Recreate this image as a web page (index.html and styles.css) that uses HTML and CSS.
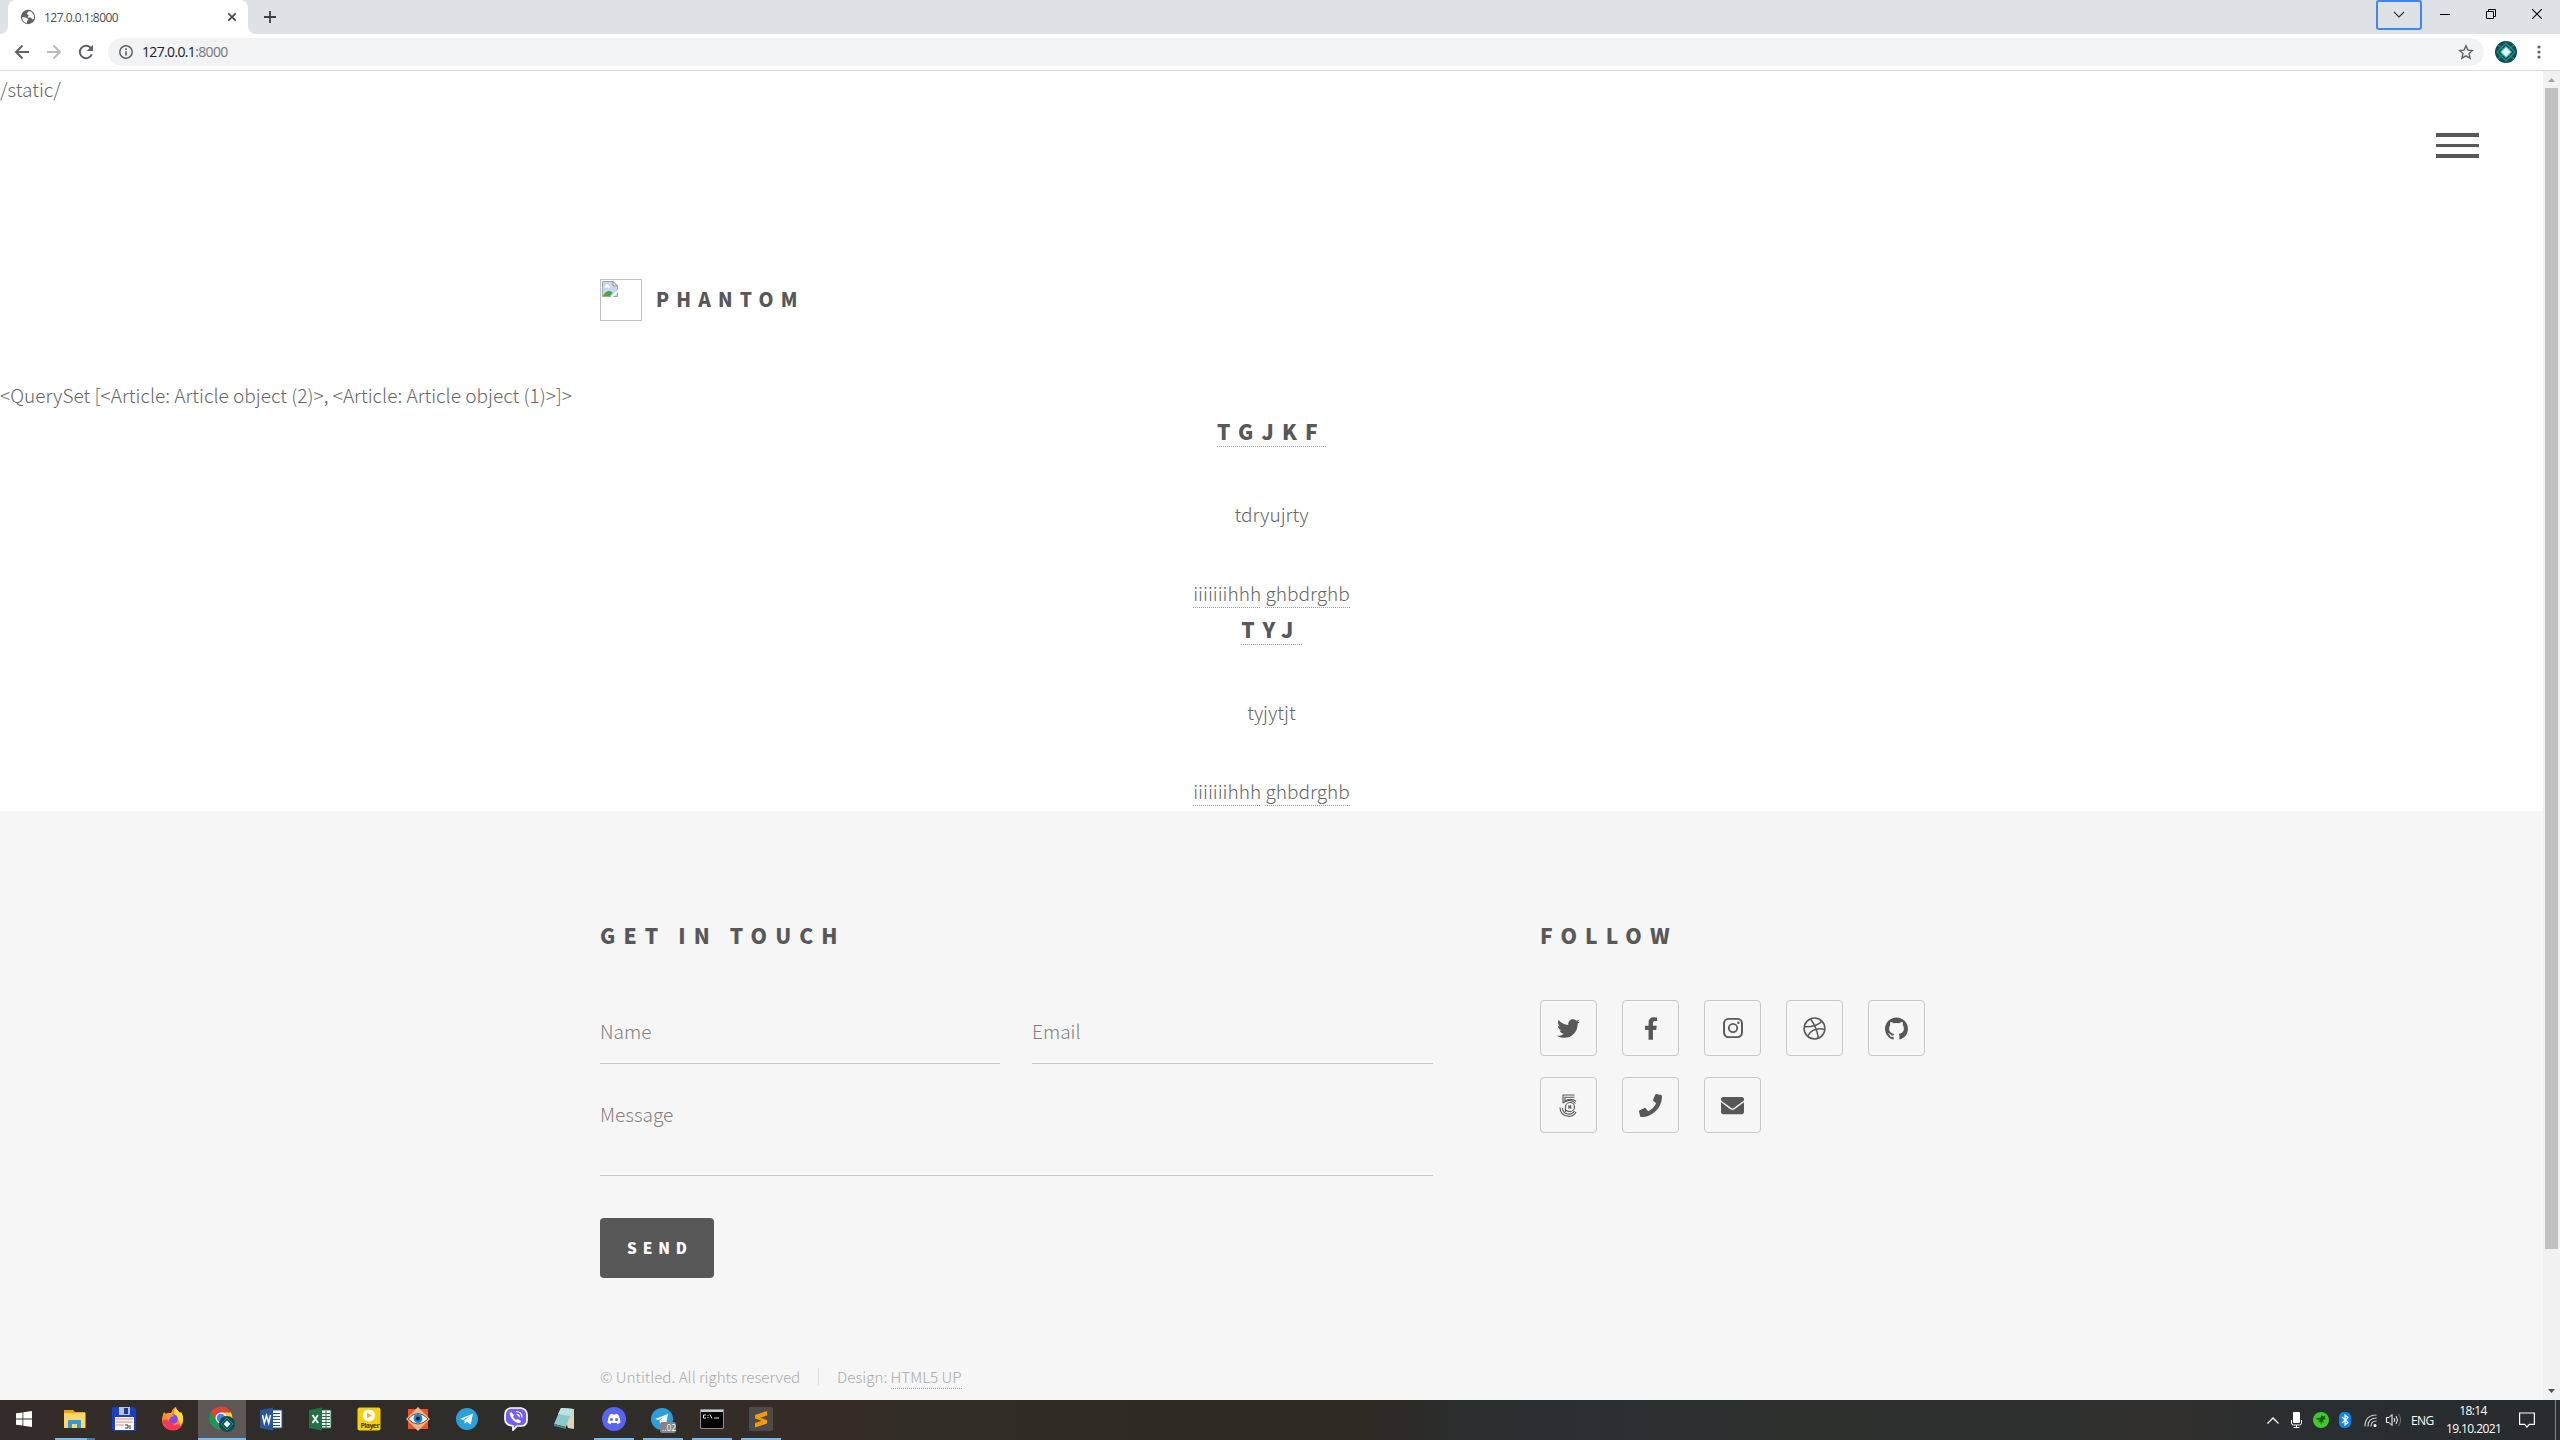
FILE: index.html
```html
<!DOCTYPE html>
<html lang="en">
<head>
<meta charset="utf-8">
<title>127.0.0.1:8000</title>
<link rel="stylesheet" href="styles.css">
</head>
<body>
<header class="tabs">
  <div class="tab-edge"></div>
  <div class="tab">
    <svg class="globe" width="16" height="16" viewBox="0 0 16 16"><circle cx="8" cy="8" r="7.2" fill="#5f6368"/><path d="M2 8.500c2-.6 3.500-.3 4.500.5 1 .7 2 .3 1.800 1.500-.2 1-1.300.8-1.300 2v1.400A6 6 0 0 1 2 8.500zM8.500 2c.3 1.200-1.700 1.500-1.700 2.700 0 1 1.800.6 1.800 1.700S7 7.700 8 8.400c1 .5 2-.4 3 .3s.5 1.600 1.500 1.600l1.200-.3A6 6 0 0 0 8.500 2z" fill="#fff"/></svg>
    <span class="tab-title">127.0.0.1:8000</span>
    <svg class="tab-close" width="10" height="10" viewBox="0 0 10 10"><path d="M1.300 1.300l7.400 7.400M8.700 1.300l-7.400 7.400" stroke="#45494d" stroke-width="1.700"/></svg>
  </div>
  <div class="tab-rest">
    <svg width="12" height="12" viewBox="0 0 12 12"><path d="M6 0v12M0 6h12" stroke="#3c4043" stroke-width="1.800"/></svg>
  </div>
  <div class="win-search"><svg width="12" height="8" viewBox="0 0 12 8"><path d="M1 1l5 5 5-5" fill="none" stroke="#333" stroke-width="1.100"/></svg></div>
  <div class="win-btn"><svg width="10" height="10" viewBox="0 0 10 10"><path d="M0 5.500h10" stroke="#000"/></svg></div>
  <div class="win-btn"><svg width="10" height="10" viewBox="0 0 10 10" fill="none" stroke="#000"><path d="M.5 2.500h7v7h-7zM2.500 2.500v-2h7v7h-2"/></svg></div>
  <div class="win-btn"><svg width="10" height="10" viewBox="0 0 10 10"><path d="M0 0l10 10M10 0L0 10" stroke="#000" stroke-width="1.100"/></svg></div>
</header>
<nav class="toolbar">
  <svg class="nav-icon" width="16" height="16" viewBox="0 0 16 16" fill="none" stroke="#5f6368" stroke-width="2"><path d="M15 8H2.500M8.500 1.500L2 8l6.500 6.500"/></svg>
  <svg class="nav-icon" width="16" height="16" viewBox="0 0 16 16" fill="none" stroke="#babcbe" stroke-width="2"><path d="M1 8h12.500M7.500 1.500L14 8l-6.500 6.500"/></svg>
  <svg class="nav-icon" width="16" height="16" viewBox="0 0 16 16"><path d="M13.800 10.300A6.200 6.200 0 1 1 12.300 3.500L14 5.200" fill="none" stroke="#5f6368" stroke-width="2"/><path d="M15 .8V7H8.800z" fill="#5f6368"/></svg>
  <div class="address">
    <svg width="14" height="14" viewBox="0 0 14 14"><circle cx="7" cy="7" r="6.200" fill="none" stroke="#5f6368" stroke-width="1.500"/><path d="M7 6.200v4.300M7 3.300v1.700" stroke="#5f6368" stroke-width="1.600"/></svg>
    <span class="url">127.0.0.1<span class="port">:8000</span></span>
    <svg class="star" width="16" height="16" viewBox="0 0 16 16"><path d="M8 1.800l1.900 4.300 4.600.4-3.500 3.100 1.100 4.600L8 11.800l-4.100 2.400L5 9.600 1.500 6.500l4.600-.4z" fill="none" stroke="#5f6368" stroke-width="1.400"/></svg>
  </div>
  <svg class="avatar" width="22" height="22" viewBox="0 0 22 22"><circle cx="11" cy="11" r="11" fill="#124a50"/><path d="M11 2l9 9-9 9-9-9zM3 4l5 4M19 4l-5 4M3 18l5-4M19 18l-5-4" fill="none" stroke="#16928f" stroke-width="1.300"/><path d="M11 5l6 6-6 6-6-6z" fill="#5cc4bd"/><path d="M11 6.500l4.500 4.500-4.500 4.500L6.500 11z" fill="#e8f4f2"/></svg>
  <svg class="dots" width="4" height="14" viewBox="0 0 4 14" fill="#5f6368"><circle cx="2" cy="2" r="1.600"/><circle cx="2" cy="7" r="1.600"/><circle cx="2" cy="12" r="1.600"/></svg>
</nav>
<div class="viewport">
  <div class="page">
    <div class="plain">/static/</div>
    <div class="menu"><i></i><i></i><i></i></div>
    <div class="inner brand">
      <div class="broken"><svg width="16" height="16" viewBox="0 0 16 16"><path d="M.5.500h10.500l4.500 4.500v10.500H.5z" fill="#c6d8f5" stroke="#a0a4a8"/><path d="M11 .5V5h4.500z" fill="#fff" stroke="#8d9297"/><path d="M2 6.500c0-1.500 2-1.700 2.600-2.700C6 3 7 4.500 7 5c1.500 0 1.500 1.500 1 1.500z" fill="#fff"/><path d="M1 15c2-4 4-5 6-5s3 1 3.500 2L8 15z" fill="#4ea638"/><path d="M8.500 16L16 8.500V11l-5 5z" fill="#fff"/></svg></div>
      <span class="brand-name">PHANTOM</span>
    </div>
    <div class="plain query">&lt;QuerySet [&lt;Article: Article object (2)&gt;, &lt;Article: Article object (1)&gt;]&gt;</div>
    <article class="post">
      <h2 class="post-head"><a class="link">TGJKF</a></h2>
      <p class="post-text">tdryujrty</p>
      <p class="post-tags"><a class="link">iiiiiiihhh</a> <a class="link">ghbdrghb</a></p>
    </article>
    <article class="post last">
      <h2 class="post-head"><a class="link">TYJ</a></h2>
      <p class="post-text">tyjytjt</p>
      <p class="post-tags"><a class="link">iiiiiiihhh</a> <a class="link">ghbdrghb</a></p>
    </article>
    <footer class="footer">
      <div class="inner columns">
        <section class="touch">
          <h2 class="title">GET IN TOUCH</h2>
          <div class="fields">
            <div class="field">Name</div>
            <div class="field">Email</div>
            <div class="field message">Message</div>
          </div>
          <div class="send">SEND</div>
        </section>
        <section class="follow">
          <h2 class="title">FOLLOW</h2>
          <div class="socials">
            <div class="social"><svg width="23" height="23" viewBox="0 0 512 512"><path d="M459.370 151.716c.325 4.548.325 9.097.325 13.645 0 138.720-105.583 298.558-298.558 298.558-59.452 0-114.680-17.219-161.137-47.106 8.447.974 16.568 1.299 25.340 1.299 49.055 0 94.213-16.568 130.274-44.832-46.132-.975-84.792-31.188-98.112-72.772 6.498.974 12.995 1.624 19.818 1.624 9.421 0 18.843-1.300 27.614-3.573-48.081-9.747-84.143-51.980-84.143-102.985v-1.299c13.969 7.797 30.214 12.670 47.431 13.319-28.264-18.843-46.781-51.005-46.781-87.391 0-19.492 5.197-37.360 14.294-52.954 51.655 63.675 129.300 105.258 216.365 109.807-1.624-7.797-2.599-15.918-2.599-24.040 0-57.828 46.782-104.934 104.934-104.934 30.213 0 57.502 12.670 76.670 33.137 23.715-4.548 46.456-13.320 66.599-25.340-7.798 24.366-24.366 44.833-46.132 57.827 21.117-2.273 41.584-8.122 60.426-16.243-14.292 20.791-32.161 39.308-52.628 54.253z"/></svg></div>
            <div class="social"><svg width="14" height="23" viewBox="0 0 320 512"><path d="M279.140 288l14.220-92.660h-88.910v-60.130c0-25.350 12.420-50.060 52.240-50.060h40.420V6.260S260.430 0 225.360 0c-73.220 0-121.080 44.380-121.080 124.720v70.620H22.890V288h81.390v224h100.170V288z"/></svg></div>
            <div class="social"><svg width="20" height="20" viewBox="20 51 408 410"><path fill-rule="evenodd" d="M132 51h184a112 112 0 0 1 112 112v186a112 112 0 0 1-112 112H132A112 112 0 0 1 20 349V163A112 112 0 0 1 132 51zm4 38a76 76 0 0 0-76 76v182a76 76 0 0 0 76 76h176a76 76 0 0 0 76-76V165a76 76 0 0 0-76-76zM224 151a105 105 0 1 1 0 210 105 105 0 0 1 0-210zm0 37a68 68 0 1 0 0 136 68 68 0 0 0 0-136zM334 122a25 25 0 1 1 0 50 25 25 0 0 1 0-50z"/></svg></div>
            <div class="social"><svg class="line" width="23" height="23" viewBox="0 0 23 23"><circle cx="11.500" cy="11.500" r="10.400"/><path d="M7.500 2c3.500 4.500 6.500 10.500 7.800 18.700M1.300 9.800c6.500.2 13-.5 17.200-5.400M4.700 19c3.200-6 9.300-8.200 17.200-6.600"/></svg></div>
            <div class="social"><svg width="23" height="23" viewBox="0 0 24 24"><path d="M12 .5C5.370.5 0 5.780 0 12.300c0 5.210 3.440 9.640 8.210 11.200.6.110.82-.26.82-.57v-2.200c-3.340.72-4.040-1.420-4.040-1.420-.55-1.370-1.330-1.740-1.330-1.740-1.090-.73.080-.72.080-.72 1.200.08 1.840 1.220 1.840 1.220 1.070 1.810 2.810 1.290 3.490.98.110-.76.420-1.290.76-1.580-2.660-.3-5.470-1.310-5.470-5.830 0-1.290.47-2.340 1.240-3.170-.13-.3-.54-1.500.11-3.130 0 0 1.010-.32 3.300 1.210a11.700 11.700 0 0 1 6.010 0c2.290-1.530 3.300-1.210 3.300-1.210.65 1.630.24 2.830.12 3.130.77.83 1.230 1.880 1.230 3.170 0 4.530-2.810 5.530-5.480 5.820.43.370.81 1.090.81 2.190v3.250c0 .32.220.69.830.57C20.570 21.930 24 17.510 24 12.300 24 5.780 18.630.5 12 .5z"/></svg></div>
            <div class="social"><svg class="line thin" width="19" height="23" viewBox="0 0 19 23"><path d="M15.500 1H4v8.200M15.500 3.200H6v4M4 9.200c4-4.200 9.500-3.500 12.500.3M6 7.300c3.500-2.800 8-2.500 11 0M1 13.500c.5 10 12.500 11.300 16 4.500M3.500 14c.5 7 9 8 12 3M6.500 18v-5a4.500 4.500 0 1 1 4.500 4.500c-2 0-3-.5-4.500-1.500M9.300 11.500l3 3M12.300 11.500l-3 3"/></svg></div>
            <div class="social"><svg width="23" height="23" viewBox="0 0 512 512"><path d="M493.400 24.600l-104-24c-11.300-2.600-22.900 3.300-27.500 13.900l-48 112c-4.200 9.800-1.400 21.300 6.900 28l60.600 49.600c-36 76.700-98.900 140.500-177.200 177.200l-49.600-60.600c-6.800-8.300-18.200-11.100-28-6.900l-112 48C3.900 366.500-2 378.100.6 389.400l24 104C27.100 504.200 36.700 512 48 512c256.100 0 464-207.500 464-464 0-11.200-7.700-20.900-18.600-23.400z"/></svg></div>
            <div class="social"><svg width="23" height="23" viewBox="0 0 512 512"><path d="M502.300 190.800c3.900-3.100 9.700-.2 9.700 4.700V400c0 26.500-21.500 48-48 48H48c-26.500 0-48-21.500-48-48V195.600c0-5 5.700-7.800 9.700-4.700 22.400 17.400 52.100 39.500 154.100 113.600 21.100 15.400 56.700 47.800 92.200 47.600 35.700.3 72-32.800 92.300-47.600 102-74.100 131.600-96.300 154-113.700zM256 320c23.200.4 56.600-29.200 73.400-41.400 132.700-96.300 142.800-104.700 173.400-128.700 5.800-4.500 9.200-11.500 9.200-18.900v-19c0-26.500-21.500-48-48-48H48c-26.500 0-48 21.500-48 48v19c0 7.400 3.400 14.300 9.200 18.900 30.600 23.900 40.700 32.400 173.400 128.700 16.800 12.200 50.200 41.800 73.400 41.400z"/></svg></div>
          </div>
        </section>
      </div>
      <div class="inner copyright"><span class="rights">© Untitled. All rights reserved</span><span class="design">Design: <a class="link">HTML5 UP</a></span></div>
    </footer>
  </div>
  <aside class="scrollbar"><span class="arrow up"></span><span class="thumb"></span><span class="arrow down"></span></aside>
</div>
<div class="taskbar">
  <div class="task start"><svg width="16" height="16" viewBox="0 0 16 16" fill="#fff"><path d="M0 2.300l6.500-.9v6.100H0zM7.300 1.300L16 0v7.500H7.300zM0 8.400h6.500v6.200L0 13.700zM7.300 8.400H16V16l-8.700-1.300z"/></svg></div>
  <div class="task open double"><svg width="24" height="24" viewBox="0 0 24 24"><path d="M1 3h9l2 2h10v16H1z" fill="#e9a71a"/><path d="M1 6h21.500v15H1z" fill="#fbd76c"/><path d="M5 21v-7q0-1 1-1h11q1 0 1 1v7h-4v-4H9v4z" fill="#3a96d8"/></svg></div>
  <div class="task"><svg width="24" height="24" viewBox="0 0 24 24"><path d="M1 0h21l2 2v22H2l-2-2V0z" fill="#1740c8"/><path d="M7 0h11v8H7z" fill="#b9c3d4"/><path d="M12 1h4v6h-4z" fill="#1b3a93"/><path d="M3 10h19v13H3z" fill="#fff"/><path d="M4 12h17M4 15h17M4 18h8" stroke="#eeaaa8" stroke-width="1.500"/><path d="M13 18h3v3h-3M18 18v4" fill="none" stroke="#333"/></svg></div>
  <div class="task"><svg width="24" height="24" viewBox="0 0 24 24"><path d="M3 5l2 2c2-2 4-1 5-1 1-4 4-6 5-6 0 3 3 4 4 6l1-1c4 7 3 18-8 18S-1 14 3 5z" fill="#ff8b28"/><path d="M1.500 13c0 14 21 14 20 0-2 7-14 6-13-1z" fill="#ff3657"/><path d="M15 0c0 3 3 4 4 6l1-1c3 5 3 10-1 14 0-7-4-9-6-12 0-4 1-6 2-7z" fill="#ffdc3b"/><circle cx="12" cy="12" r="4.800" fill="#8549e8"/><path d="M5 7c3-2 7 0 8 2l-3 1c-1 1-2 2-2 4-3-1-3-5-3-7z" fill="#ff9a2c"/></svg></div>
  <div class="task open active"><svg width="26" height="26" viewBox="0 0 26 26"><circle cx="12" cy="12" r="11.500" fill="#db4437"/><path d="M2 6.300L8 16l4 7.500A11.500 11.500 0 0 1 2 6.300z" fill="#0f9d58"/><path d="M12 6.500h10A11.500 11.500 0 0 1 12 23.500l4.500-9z" fill="#ffcd40"/><circle cx="12" cy="12" r="5.500" fill="#fff"/><circle cx="12" cy="12" r="4.300" fill="#4285f4"/><circle cx="18" cy="18" r="8" fill="#124a50"/><path d="M18 12l6 6-6 6-6-6z" fill="none" stroke="#16928f"/><path d="M18 14.500l3.500 3.500-3.500 3.500-3.500-3.500z" fill="#dff4f1"/></svg></div>
  <div class="task"><svg width="24" height="24" viewBox="0 0 24 24"><path d="M11 3h12v18H11z" fill="#fff" stroke="#2b579a"/><path d="M13 6.500h8M13 9.500h8M13 12.500h8M13 15.500h8M13 18.500h8" stroke="#2b579a"/><path d="M1 3l13-2.500v23L1 21z" fill="#2b579a"/><path d="M3.500 8l1.800 8 2.200-7.500L9.700 16l1.800-8" fill="none" stroke="#fff" stroke-width="1.500"/></svg></div>
  <div class="task"><svg width="24" height="24" viewBox="0 0 24 24"><path d="M11 3h12v18H11z" fill="#fff" stroke="#217346"/><path d="M14 6.500h8M14 9.500h8M14 12.500h8M14 15.500h8M14 18.500h8M18 4v17" stroke="#217346"/><path d="M1 3l13-2.500v23L1 21z" fill="#217346"/><path d="M4.500 8l5.500 8M10 8l-5.500 8" fill="none" stroke="#fff" stroke-width="1.800"/></svg></div>
  <div class="task"><svg width="24" height="24" viewBox="0 0 24 24"><rect x=".5" y=".5" width="23" height="23" rx="2" fill="#f5cf10"/><circle cx="12" cy="8.500" r="6" fill="#fff"/><path d="M10 5.500l5 3-5 3z" fill="#f5b800"/><text x="3.500" y="21" class="player">Player</text></svg></div>
  <div class="task"><svg width="24" height="24" viewBox="0 0 24 24"><path d="M2 2h20v20H2z" fill="#f4512c"/><path d="M12 0l12 12-12 12L0 12z" fill="#e9b78a"/><path d="M2 12q10-11 20 0-10 10-20 0z" fill="#fff" stroke="#7c4425"/><circle cx="12" cy="11.500" r="4.500" fill="#1c84d8"/><circle cx="12" cy="11.500" r="2" fill="#081c38"/></svg></div>
  <div class="task"><svg width="22" height="22" viewBox="0 0 24 24"><circle cx="12" cy="12" r="12" fill="#2aa1da"/><path d="M4.500 11.700L18.500 6.200 16 18l-4.200-3-2.200 2.200-.5-3.700 6-5.200-7.300 4.700z" fill="#fff"/></svg></div>
  <div class="task"><svg width="24" height="24" viewBox="0 0 24 24"><path d="M7 1h10q6 1 6 7v5q0 6-6 6h-4l-4 4v-4Q1 18 1 12V8q0-6 6-7z" fill="#7360f2" stroke="#fff" stroke-width="1.700"/><path d="M7 5q-2 1-1 3 2 6 8 8 3 0 3-2l-3-2-2 1-3-3 1-2z" fill="#fff"/><path d="M12 4.500q6 .3 6 6M12.500 7.300q3 .2 3 3" fill="none" stroke="#fff" stroke-width="1.200"/></svg></div>
  <div class="task"><svg width="24" height="24" viewBox="0 0 24 24"><path d="M8 1l13 1v20l-6-1z" fill="#ded5b7"/><path d="M8 1l12 1-7 18-12-3z" fill="#8cc9cf"/><path d="M8 1l12 1-3 7-12-2z" fill="#bde4e4"/><path d="M1 17l12 3v2L1 19z" fill="#527f83"/></svg></div>
  <div class="task open"><svg width="24" height="24" viewBox="0 0 24 24"><circle cx="12" cy="12" r="12" fill="#5865f2"/><path d="M8 7.500l2-.7.5.8q1.500-.3 3 0l.5-.8 2 .7q2.500 3.500 2.500 8L15.500 17.300l-.8-1.500q-2.700.6-5.400 0l-.8 1.500-3-1.800q0-4.500 2.500-8z" fill="#fff"/><circle cx="9.500" cy="12.500" r="1.500" fill="#5865f2"/><circle cx="14.500" cy="12.500" r="1.500" fill="#5865f2"/></svg></div>
  <div class="task open"><svg class="tg-badge" width="25" height="26" viewBox="0 0 25 26"><circle cx="11" cy="12" r="11" fill="#2aa1da"/><path d="M4 12L17 7l-2 10.500-4-2.500-2 2-.5-3.500L14 9l-6.500 4z" fill="#fff"/><rect x="9" y="15" width="16" height="11" rx="2.500" fill="#858585"/><text x="11" y="24" class="count">..02</text></svg></div>
  <div class="task open"><svg width="24" height="20" viewBox="0 0 24 20"><path d="M.5.500h23v19H.5z" fill="#050505" stroke="#8d8d8d"/><path d="M1 1h22v2H1z" fill="#c8cdd4"/><path d="M6 6H3.500v3H6M8 6v1M8 8v1M10 5.500l2 4M14 9h5" fill="none" stroke="#ddd"/></svg></div>
  <div class="task open"><svg width="24" height="24" viewBox="0 0 24 24"><rect width="24" height="24" rx="1.500" fill="#4b4b4b"/><path d="M6 8l12-4v4.500l-7 2.300 7 2.200v3.500L6 20.500V16l7-2.300-7-2.200z" fill="#ff9800"/></svg></div>
  <div class="tray">
    <svg width="12" height="7" viewBox="0 0 12 7"><path d="M.5 6.500L6 1l5.500 5.500" fill="none" stroke="#fff" stroke-width="1.300"/></svg>
    <svg class="mic" width="11" height="16" viewBox="0 0 11 16"><rect x="2" width="7" height="11" rx="1" fill="#fff"/><path d="M.5 8v3q0 2 2 2h6q2 0 2-2V8M5.500 13v2.500M2.500 15.500h6" fill="none" stroke="#fff"/></svg>
    <svg class="razer" width="16" height="16" viewBox="0 0 16 16"><circle cx="8" cy="8" r="8" fill="#44c728"/><path d="M2.500 7c2-2 3-.5 5-1.500L9 3l1 1.500 3-1-1.500 2 1.500 1.500-3 1 1 3-2-1.500L8 13 7.500 9.500 5 10 7 8z" fill="#155c16"/></svg>
    <svg class="bt" width="12" height="16" viewBox="0 0 12 16"><rect width="12" height="16" rx="5" fill="#0a84f5"/><path d="M3 5l6 5.500L6 13V3l3 2.500L3 11" fill="none" stroke="#fff" stroke-width="1.200"/></svg>
    <svg class="wifi" width="13" height="13" viewBox="0 0 13 13"><path d="M1 12.500Q1 1 12.500 1M4 12.500Q4 4 12.500 4M7 12.500Q7 7 12.500 7" fill="none" stroke="#c9caca" stroke-width="1.200"/><circle cx="11" cy="11.500" r="1.500" fill="#fff"/></svg>
    <svg class="vol" width="16" height="14" viewBox="0 0 16 14" fill="none" stroke="#fff"><path d="M.5 4.500h2.500L6 1.500v11l-3-3H.5zM8 5q1.500 2 0 4M10 3q3 4 0 8"/><path d="M12.500 1q4 6 0 12" stroke="#777"/></svg>
    <span class="lang">ENG</span>
    <div class="clock"><span>18:14</span><span>19.10.2021</span></div>
    <svg class="notice" width="16" height="16" viewBox="0 0 16 16"><path d="M.6 1h14.800v11.400h-5L8 15l-2.400-2.600h-5z" fill="none" stroke="#fff" stroke-width="1.200"/></svg>
    <div class="show-desktop"></div>
  </div>
</div>
</body>
</html>
```
FILE: styles.css
```css
* { box-sizing: border-box; }
body {
  margin: 0;
  width: 2560px;
  height: 1440px;
  overflow: hidden;
  display: flex;
  flex-direction: column;
  background: #fff;
  font-family: "Open Sans", "Noto Sans", sans-serif;
}
svg { display: block; flex: none; }
h2, p { margin: 0; }

/* Browser window */
.tabs { display: flex; height: 34px; background: #fff; }
.tab-edge { width: 8px; background: #dee1e6; border-bottom-right-radius: 8px; }
.tab {
  display: flex;
  align-items: center;
  width: 240px;
  padding-left: 12px;
  border-radius: 8px 8px 0 0;
  background: #fff;
  box-shadow: -4px -10px 0 4px #dee1e6, 4px -10px 0 4px #dee1e6;
}
.tab-title { margin-left: 8px; width: 183px; font-size: 12px; letter-spacing: -.5px; color: #4a4d51; }
.tab-rest {
  display: flex;
  align-items: center;
  flex: 1;
  padding-left: 16px;
  background: #dee1e6;
  border-bottom-left-radius: 8px;
}
.win-search {
  display: flex;
  align-items: center;
  justify-content: center;
  width: 46px;
  height: 34px;
  padding-bottom: 4px;
  background: #dee1e6;
  position: relative;
}
.win-search::after {
  content: "";
  position: absolute;
  inset: 0 0 4px;
  border: 2px solid #4285f4;
  border-radius: 3px;
}
.win-btn { display: flex; justify-content: center; width: 46px; padding-top: 9px; background: #dee1e6; }
.toolbar {
  display: flex;
  align-items: center;
  height: 37px;
  padding: 0 19px 1px 14px;
  border-bottom: 1px solid #d8dadd;
}
.nav-icon { margin-right: 16px; }
.address {
  display: flex;
  align-items: center;
  flex: 1;
  height: 28px;
  margin-left: -2px;
  padding: 0 10px 0 11px;
  border-radius: 14px;
  background: #f1f3f4;
}
.url { flex: 1; margin-left: 9px; font-size: 14px; letter-spacing: -.65px; color: #202124; }
.port { color: #74787c; }
.avatar { margin: 0 20px 0 11px; }

/* Page */
.viewport { display: flex; height: 1329px; }
.page {
  display: flex;
  flex-direction: column;
  width: 2543px;
  font: 300 19.080px/36px "Noto Sans CJK SC", "Source Sans Pro", sans-serif;
  color: #666;
}
.plain { height: 36px; white-space: pre; }
.menu {
  display: flex;
  flex-direction: column;
  gap: 7px;
  width: 43px;
  height: 25px;
  margin: 26px 64px 0 auto;
}
.menu i { height: 3.600px; background: #585858; }
.inner { width: 1343px; margin: 0 auto; }
.brand { display: flex; gap: 14px; height: 42px; margin-top: 121px; }
.brand-name, .post-head, .title { color: #585858; font-weight: 900; }
.broken { width: 42px; height: 42px; padding: 1px; border: 1px solid #c0c0c0; }
.brand-name { letter-spacing: 7.200px; line-height: 40px; }
.query { margin-top: 56px; }
.post { display: flex; flex-direction: column; align-items: center; height: 198px; }
.query + .post { margin-top: 1px; }
.last { height: 199px; }
.post-head { font-size: 21px; line-height: 35px; height: 82px; letter-spacing: 8.200px; }
.post-text { height: 79px; }
.post-tags { height: 36px; }
.link { display: inline-block; height: 33px; line-height: inherit; background: repeating-linear-gradient(90deg, #999 0 1px, transparent 1px 2px) 0 100% / 100% 1px no-repeat; }
.footer { flex: 1; background: #f6f6f6; overflow: hidden; }
.columns { display: flex; height: 450px; margin-top: 107px; }
.touch { width: 833px; margin-right: 107px; }
.title { font-size: 21px; line-height: 35px; height: 82px; letter-spacing: 8.050px; word-spacing: -.8px; }
.fields { display: grid; grid-template-columns: 400px 401px; column-gap: 32px; grid-template-rows: 64px 112px; }
.field { padding-top: 13px; border-bottom: 1px solid #c8c8c8; color: #7f7f7f; }
.message { grid-column: 1 / 3; padding-top: 32px; }
.send {
  width: 114px;
  height: 60px;
  margin-top: 42px;
  padding-left: 27px;
  border-radius: 4px;
  background: #585858;
  color: #fff;
  font-size: 15.300px;
  font-weight: 900;
  line-height: 58px;
  letter-spacing: 5.900px;
}
.socials { display: grid; grid-template-columns: repeat(5, 57px); gap: 21px 25px; }
.social { display: flex; align-items: center; justify-content: center; height: 56px; border: 1px solid #c8c8c8; border-radius: 4px; fill: #585858; }
.line { fill: none; stroke: #585858; stroke-width: 1.500; }
.thin { stroke-width: 1.150; }
.copyright { display: flex; align-items: flex-start; font-size: 15.200px; line-height: 17px; color: #aaa; }
.rights { width: 219px; height: 17px; border-right: 1px solid #dcdcdc; white-space: nowrap; }
.design { margin-left: 18px; }
.copyright .link { height: 21px; }
.scrollbar { display: flex; flex-direction: column; align-items: center; width: 17px; background: #f1f1f1; }
.arrow { width: 7px; height: 4px; background: #a3a3a3; clip-path: polygon(50% 0, 100% 100%, 0 100%); margin: 7px 0 6px; }
.thumb { width: 13px; height: 1161px; background: #c1c1c1; }
.down { margin: auto 0 7px; background: #505050; clip-path: polygon(0 0, 100% 0, 50% 100%); }

/* Taskbar */
.taskbar { display: flex; gap: 1px; height: 40px; background: linear-gradient(90deg, #352c28, #2f2c2a 12%, #2f2e2a 24%, #372b27 32%, #302c26 36%, #2d2923 54%, #2b2e2e 57%, #2a3033 62%, #2e302e 70%, #2d302f 80%, #32302e 84%, #2a2e30 90%, #282c2e); }
.task { display: flex; align-items: center; justify-content: center; width: 48px; border-bottom: 2px solid transparent; }
.start { margin-right: 2px; }
.open { background: linear-gradient(#76b9ed, #76b9ed) 50% 100% / 40px 2px no-repeat border-box; }
.double { background-image: linear-gradient(90deg, #76b9ed 32px, #4d7ba0 32px); }
.active { background: #5c5957; border-bottom-color: #76b9ed; }
.tg-badge { margin-top: 2px; }
.player { font: 700 7px "Open Sans", sans-serif; letter-spacing: -.6px; fill: #4a3b00; }
.count { font: 8.500px "Open Sans", sans-serif; fill: #fff; }
.tray { display: flex; align-items: center; margin-left: auto; color: #fff; font-size: 12px; }
.mic { margin-left: 12px; }
.razer { margin-left: 11px; }
.bt { margin-left: 10px; }
.wifi { margin-left: 13px; }
.vol { margin-left: 9px; }
.lang { width: 23px; margin-left: 9px; letter-spacing: -.6px; }
.clock { display: flex; flex-direction: column; width: 54px; margin-left: 12px; text-align: center; line-height: 18px; letter-spacing: -.6px; white-space: nowrap; }
.notice { margin-left: 19px; }
.show-desktop { width: 5px; height: 40px; margin-left: 20px; border-left: 1px solid #858788; }
```
